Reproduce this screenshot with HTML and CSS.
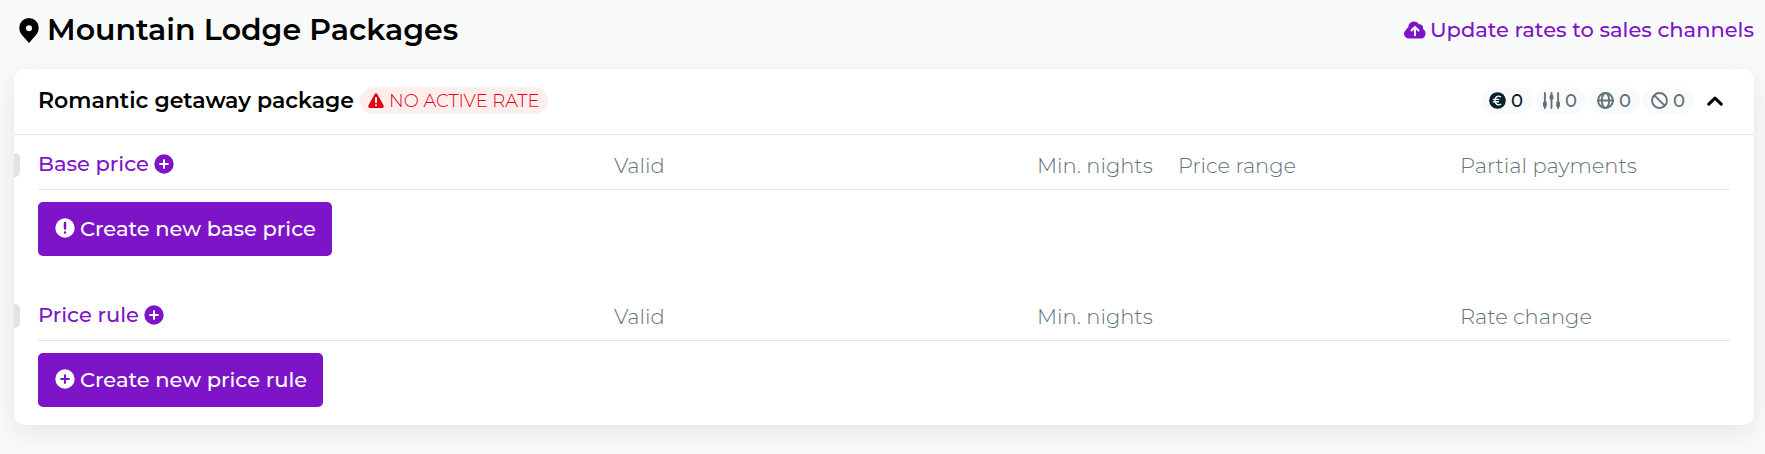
FILE: index.html
```html
<!DOCTYPE html>
<html lang="en">
<head>
    <meta charset="UTF-8">
    <meta name="viewport" content="width=device-width, initial-scale=1">
    <title>Mountain Lodge Packages</title>
    <link rel="stylesheet" href="styles.css">
</head>
<body>
<svg class="sprite" aria-hidden="true">
    <symbol id="plus" viewBox="0 0 20 20">
        <path fill-rule="evenodd" d="M10 .3a9.7 9.7 0 1 0 0 19.4A9.7 9.7 0 0 0 10 .3zM9 5.6q1-.9 2 0V9h3.4q.9 1 0 2H11v3.4q-1 .9-2 0V11H5.6q-.9-1 0-2H9z"/>
    </symbol>
</svg>
<div class="page">
    <div class="page-head">
        <h1 class="page-title">
            <svg class="icon-pin" viewBox="0 0 20 25"><path fill-rule="evenodd" d="M10 0a9.7 9.7 0 0 1 9.7 9.7c0 3.400-1.300 5.800-3.300 8.100L10 25l-6.400-7.200C1.600 15.500.3 13.100.3 9.700A9.700 9.700 0 0 1 10 0zm0 7.200a3 3 0 1 0 0 6 3 3 0 0 0 0-6z"/></svg>
            Mountain Lodge Packages
        </h1>
        <a class="update" href="#">
            <svg class="icon-cloud" viewBox="0 0 22 18"><path d="M5 17.500a4.700 4.700 0 0 1-3-8.500C2.500 7.500 3.400 6.800 4.300 6.400 4.300 3 6.800.5 9.900.5c2.200 0 4 1 5 2.700 2.400-.3 4.400 1.400 4.200 3.800l-.2.900c1.600.7 2.700 2.300 2.700 4.300 0 3-2 5.300-4.700 5.300z"/><path class="cut" d="M11 14.200V6.200M7.500 9.500 11 6l3.500 3.500"/></svg>
            Update rates to sales channels
        </a>
    </div>

    <section class="card">
        <header class="card-head">
            <h2 class="card-title">Romantic getaway package</h2>
            <span class="badge badge-alert">
                <svg class="icon-alert" viewBox="0 0 16 16"><path d="M6.700 1.200q1.300-1.800 2.600 0l6.200 11q.9 2.500-1.500 2.800H2q-2.400-.3-1.500-2.800z"/><path class="cut" d="M8 5v4.200M8 12.200v.1"/></svg>
                NO ACTIVE RATE
            </span>
            <div class="counters">
                <span class="badge counter active">
                    <svg viewBox="0 0 18 18"><circle cx="9" cy="9" r="8.800"/><path class="euro" d="M12.700 5.300C9.500 3 6.300 5.500 6.300 9s3.200 6 6.400 3.700M4 7.800h7M4 10.300h6.500"/></svg>
                    0
                </span>
                <span class="badge counter">
                    <svg viewBox="0 0 18 18"><path class="line" d="M2 1v16M9 1v16M16 1v16"/><rect x="0" y="10" width="4" height="6" rx="1.500"/><rect x="7" y="3" width="4" height="5" rx="1.500"/><rect x="14" y="10" width="4" height="6" rx="1.500"/></svg>
                    0
                </span>
                <span class="badge counter">
                    <svg viewBox="0 0 18 18"><g class="line"><circle cx="9" cy="9" r="7.900"/><ellipse cx="9" cy="9" rx="3.900" ry="7.900"/><path d="M1 9h16"/></g></svg>
                    0
                </span>
                <span class="badge counter">
                    <svg viewBox="0 0 18 18"><path class="line" d="M3.500 3.500l11 11M9 1.100a7.900 7.900 0 1 0 0 15.800A7.900 7.900 0 0 0 9 1.100z"/></svg>
                    0
                </span>
            </div>
            <button class="toggle" type="button" aria-label="Collapse">
                <svg viewBox="0 0 16 10"><path d="M1.800 8.200 8 2.200l6.200 6"/></svg>
            </button>
        </header>

        <div class="section">
            <table class="rates">
                <colgroup><col class="c4"><col class="c3"><col class="c1"><col class="c2"><col class="c2"></colgroup>
                <thead>
                <tr>
                    <th><a class="add" href="#">Base price <svg class="icon"><use href="#plus"/></svg></a></th>
                    <th>Valid</th>
                    <th>Min. nights</th>
                    <th>Price range</th>
                    <th>Partial payments</th>
                </tr>
                </thead>
            </table>
            <button class="btn" type="button">
                <svg class="icon" viewBox="0 0 20 20"><circle cx="10" cy="10" r="9.700"/><path class="mark" d="M10 5v5.500M10 14.500v.1"/></svg>
                Create new base price
            </button>
        </div>

        <div class="section">
            <table class="rates">
                <colgroup><col class="c4"><col class="c3"><col class="c1"><col class="c2"><col class="c2"></colgroup>
                <thead>
                <tr>
                    <th><a class="add" href="#">Price rule <svg class="icon"><use href="#plus"/></svg></a></th>
                    <th>Valid</th>
                    <th>Min. nights</th>
                    <td></td>
                    <th>Rate change</th>
                </tr>
                </thead>
            </table>
            <button class="btn" type="button">
                <svg class="icon"><use href="#plus"/></svg>
                Create new price rule
            </button>
        </div>
    </section>
</div>
</body>
</html>
```

FILE: styles.css
```css
* {
    box-sizing: border-box;
    margin: 0;
    padding: 0;
}

body {
    background: #f9fbfa;
    color: #000;
    font-family: Montserrat, Inter, "Liberation Sans", sans-serif;
    font-size: 21px;
    line-height: 30px;
    overflow-x: hidden;
}

svg {
    fill: currentColor;
    flex: none;
}

a {
    color: #7e14c8;
    text-decoration: none;
}

.sprite {
    display: none;
}

.page {
    padding: 12px 11px 29px 14px;
}

.page-head {
    display: flex;
    align-items: center;
    justify-content: space-between;
    height: 36px;
    margin-bottom: 21px;
}

.page-title {
    display: flex;
    align-items: center;
    gap: 8px;
    padding-left: 5px;
    font-size: 30px;
    font-weight: 600;
}

.icon-pin {
    width: 20px;
    height: 25px;
}

.update {
    display: flex;
    align-items: center;
    gap: 4px;
    font-weight: 500;
}

.icon-cloud {
    width: 22px;
    height: 18px;
}

.cut {
    fill: none;
    stroke: #f9fbfa;
    stroke-width: 2;
    stroke-linecap: round;
    stroke-linejoin: round;
}

.card {
    background: #fff;
    border-radius: 12px;
    box-shadow: 0 8px 28px rgba(0, 20, 10, 0.09);
    padding-bottom: 18px;
}

.card-head {
    display: flex;
    align-items: center;
    height: 66px;
    padding: 0 31px 2px 24px;
    border-bottom: 1px solid #e1e3e6;
}

.card-title {
    font-size: 22px;
    font-weight: 600;
}

.badge {
    display: flex;
    align-items: center;
    gap: 5px;
    height: 27px;
    padding: 0 8px;
    border-radius: 14px;
    background: #f9fbfa;
    font-size: 18px;
}

.badge-alert {
    margin-left: 6px;
    background: #ffeeee;
    color: #e1000f;
    font-weight: 300;
}

.icon-alert {
    width: 16px;
    height: 16px;
}

.counters {
    display: flex;
    gap: 3px;
    margin-left: auto;
}

.counter {
    width: 51px;
    color: #61727b;
    font-weight: 500;
}

.counter.active {
    color: #08202b;
}

.counter svg {
    width: 17px;
    height: 17px;
}

.line {
    fill: none;
    stroke: currentColor;
    stroke-width: 2;
    stroke-linecap: round;
}

.euro {
    fill: none;
    stroke: #fff;
    stroke-width: 1.5;
}

.toggle {
    display: flex;
    margin-left: 13px;
    border: 0;
    background: none;
    cursor: pointer;
}

.toggle svg {
    width: 16px;
    height: 10px;
    fill: none;
    stroke: #000;
    stroke-width: 3;
    stroke-linecap: round;
    stroke-linejoin: round;
}

.section {
    position: relative;
    padding: 12px 24px 0;
}

.section + .section {
    margin-top: 42px;
    padding-top: 0;
}

/* grey tab on the card edge */
.section::before {
    content: "";
    position: absolute;
    left: 0;
    top: 18px;
    width: 6px;
    height: 24px;
    border-radius: 0 5px 5px 0;
    background: #e1e3e6;
}

.section + .section::before {
    top: 6px;
}

.rates {
    width: 100%;
    table-layout: fixed;
    border-spacing: 0;
    border-bottom: 1px solid #e1e3e6;
    margin-bottom: 12px;
}

.rates .c1 {
    width: 8.3333%;
}

.rates .c2 {
    width: 16.6667%;
}

.rates .c3 {
    width: 25%;
}

.rates .c4 {
    width: 33.3333%;
}

.rates th {
    padding: 4px 0 8px 12px;
    color: #61727b;
    font-weight: 300;
    text-align: left;
    vertical-align: top;
    white-space: nowrap;
}

.rates th:first-child {
    padding: 2px 0 10px;
}

.add {
    display: flex;
    align-items: center;
    gap: 5px;
    width: fit-content;
    font-weight: 500;
}

.icon {
    width: 20px;
    height: 20px;
}

.btn {
    display: flex;
    align-items: center;
    gap: 5px;
    height: 54px;
    padding: 0 16px 2px 17px;
    border: 0;
    border-radius: 5px;
    background: #7e14c8;
    color: #fff;
    font-family: inherit;
    font-size: 21px;
    font-weight: 500;
    cursor: pointer;
}

.btn .mark {
    stroke: #7e14c8;
    stroke-width: 2.5;
    stroke-linecap: round;
}
```
